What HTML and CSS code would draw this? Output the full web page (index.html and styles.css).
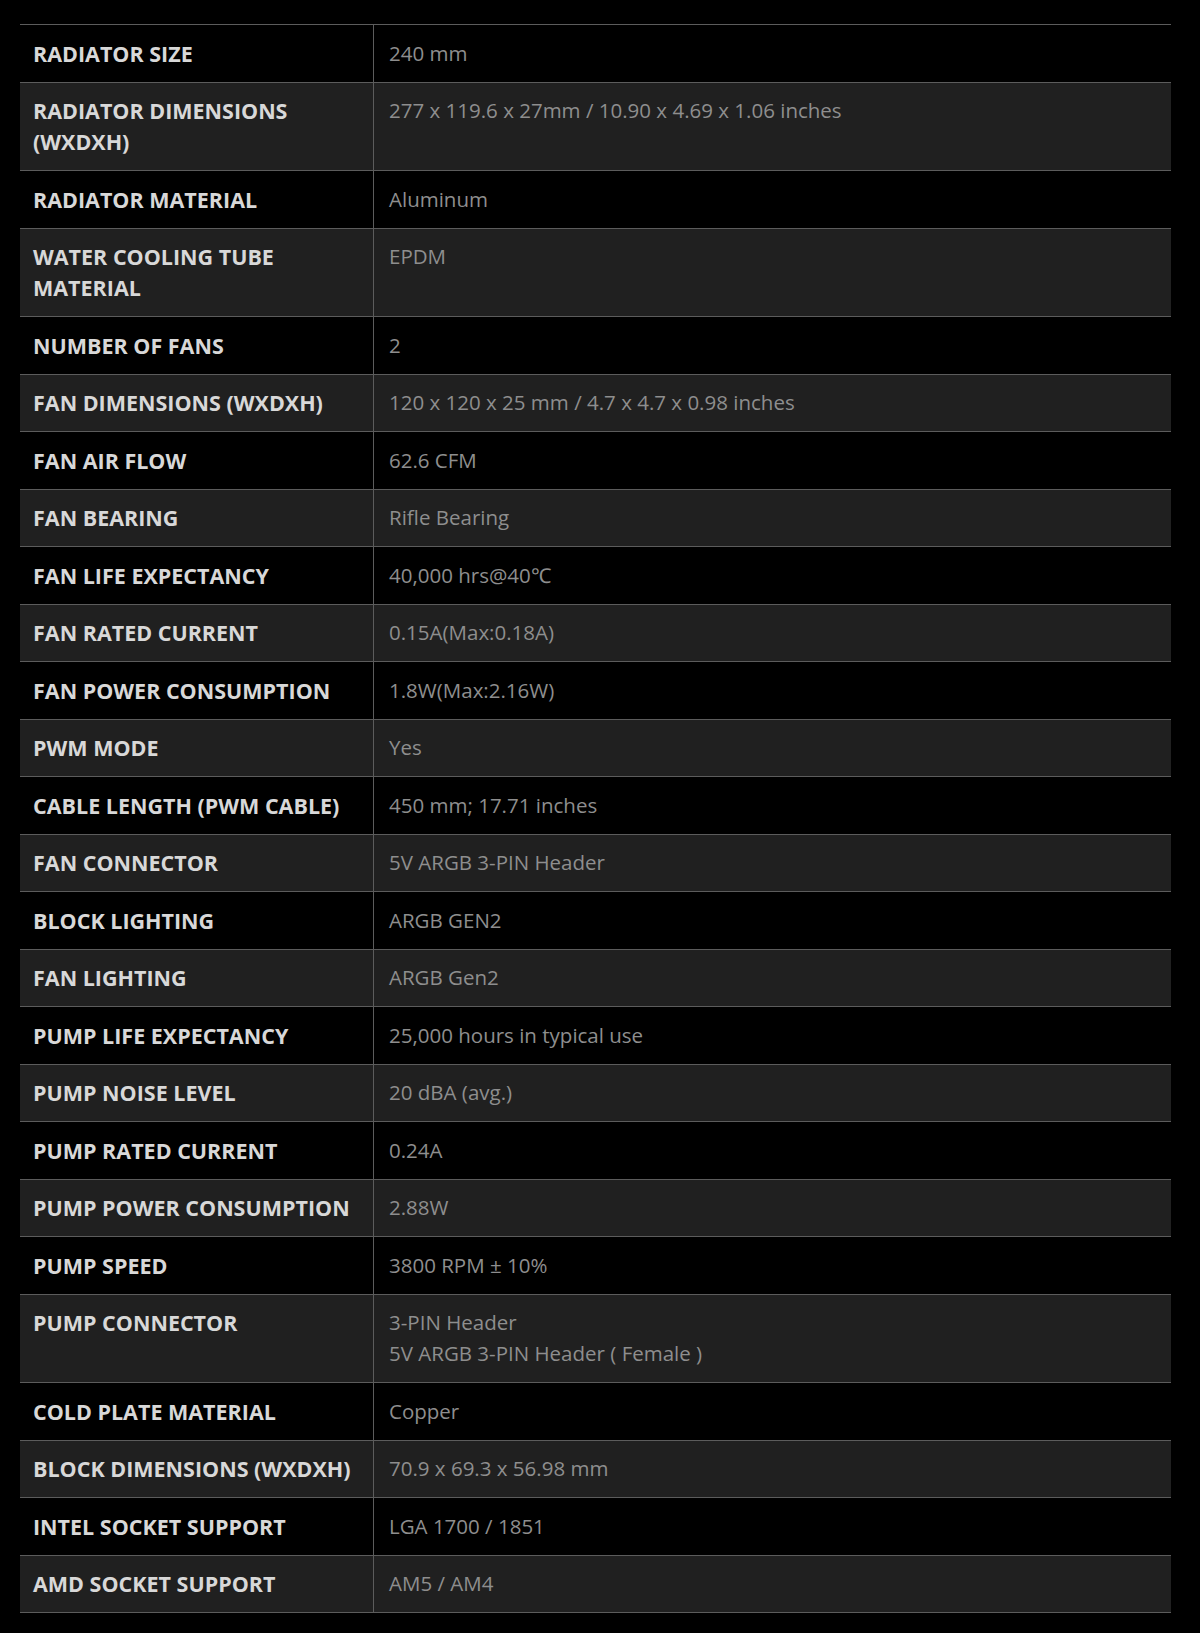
FILE: index.html
```html
<!DOCTYPE html>
<html lang="en">
<head>
    <meta charset="UTF-8">
    <meta name="viewport" content="width=device-width, initial-scale=1.0">
    <title>Specifications</title>
    <link rel="stylesheet" href="styles.css">
</head>
<body>
    <div id="specs">
        <table class="spec-table">
            <tr><th>Radiator Size</th><td>240 mm</td></tr>
            <tr><th>Radiator Dimensions (WxDxH)</th><td>277 x 119.6 x 27mm / 10.90 x 4.69 x 1.06 inches</td></tr>
            <tr><th>Radiator Material</th><td>Aluminum</td></tr>
            <tr><th>Water Cooling Tube Material</th><td>EPDM</td></tr>
            <tr><th>Number of Fans</th><td>2</td></tr>
            <tr><th>Fan Dimensions (WxDxH)</th><td>120 x 120 x 25 mm / 4.7 x 4.7 x 0.98 inches</td></tr>
            <tr><th>Fan Air Flow</th><td>62.6 CFM</td></tr>
            <tr><th>Fan Bearing</th><td>Rifle Bearing</td></tr>
            <tr><th>Fan Life Expectancy</th><td>40,000 hrs@40℃</td></tr>
            <tr><th>Fan Rated Current</th><td>0.15A(Max:0.18A)</td></tr>
            <tr><th>Fan Power Consumption</th><td>1.8W(Max:2.16W)</td></tr>
            <tr><th>PWM Mode</th><td>Yes</td></tr>
            <tr><th>Cable Length (PWM Cable)</th><td>450 mm; 17.71 inches</td></tr>
            <tr><th>Fan Connector</th><td>5V ARGB 3-PIN Header</td></tr>
            <tr><th>Block Lighting</th><td>ARGB GEN2</td></tr>
            <tr><th>Fan Lighting</th><td>ARGB Gen2</td></tr>
            <tr><th>Pump Life Expectancy</th><td>25,000 hours in typical use</td></tr>
            <tr><th>Pump Noise Level</th><td>20 dBA (avg.)</td></tr>
            <tr><th>Pump Rated Current</th><td>0.24A</td></tr>
            <tr><th>Pump Power Consumption</th><td>2.88W</td></tr>
            <tr><th>Pump Speed</th><td>3800 RPM ± 10%</td></tr>
            <tr><th>Pump Connector</th><td>3-PIN Header<br>5V ARGB 3-PIN Header ( Female )</td></tr>
            <tr><th>Cold Plate Material</th><td>Copper</td></tr>
            <tr><th>Block Dimensions (WxDxH)</th><td>70.9 x 69.3 x 56.98 mm</td></tr>
            <tr><th>Intel Socket Support</th><td>LGA 1700 / 1851</td></tr>
            <tr><th>AMD Socket Support</th><td>AM5 / AM4</td></tr>
        </table>
    </div>
</body>
</html>
```

FILE: styles.css
```css
body {
    margin: 0;
    background: #000;
    font-family: "Open Sans", "Liberation Sans", sans-serif;
}
#specs {
    padding: 24px 29px 21px 20px;
}
.spec-table {
    width: 100%;
    border-collapse: collapse;
    border-top: 1px solid #5c5c5c;
}
.spec-table tr {
    border-bottom: 1px solid #5c5c5c;
}
.spec-table tr:nth-child(even) {
    background: #202020;
}
.spec-table th,
.spec-table td {
    vertical-align: top;
    text-align: left;
    line-height: 31px;
    padding: 12.75px 15px 12.75px 13px;
}
.spec-table th {
    width: 325px;
    color: #d8d8d8;
    font-size: 21.5px;
    font-weight: 700;
    text-transform: uppercase;
    border-right: 1px solid #5c5c5c;
}
.spec-table td {
    padding-left: 15px;
    color: #8e8e8e;
    font-size: 20.5px;
    font-weight: 400;
}
```
